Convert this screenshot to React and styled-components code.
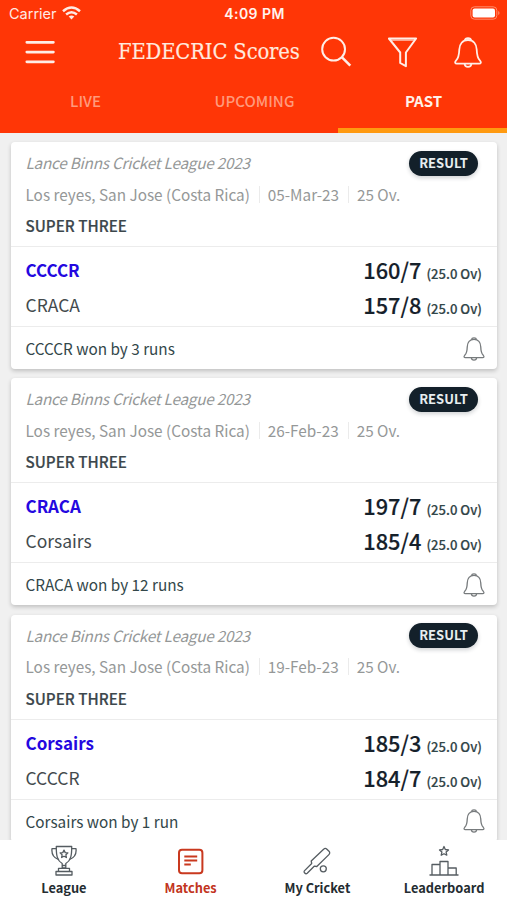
import styled, { createGlobalStyle } from "styled-components";

const GlobalStyle=createGlobalStyle`
    *{
        box-sizing:border-box;
    }
    body{
        margin:0;
        background-color:#f0f0f0;
        font-family:"Noto Sans CJK SC", "Source Sans Pro", sans-serif;
    }
`;
const Container=styled.div`
    display:flex;
    flex-direction:column;
    width:507px;
    height:900px;
    overflow:hidden;
    background-color:#f0f0f0;
`;
const Header=styled.header`
    flex:none;
    height:133px;
    color:white;
    background-color:#ff3606;
`;
const StatusBar=styled.div`
    display:grid;
    grid-template-columns:1fr auto 1fr;
    align-items:center;
    height:27px;
    padding:0 7px 0 9px;
    font-family:Inter, sans-serif;
    font-size:14.5px;
    line-height:27px;
    color:#ffeae3;
`;
const Carrier=styled.div`
    display:flex;
    align-items:center;
    gap:5px;
    & > svg{
        margin-top:-2px;
    }
`;
const Clock=styled.div`
    font-size:14px;
    font-weight:600;
    letter-spacing:0.45px;
    color:#fff3ee;
`;
const Battery=styled.div`
    display:flex;
    justify-content:flex-end;
    padding-bottom:1px;
`;
const TitleBar=styled.div`
    display:flex;
    align-items:center;
    height:50px;
    padding:0 24px 0 23px;
`;
const Title=styled.h1`
    width:182px;
    margin:0 21px 0 63px;
    font-family:"DejaVu Serif Condensed", "DejaVu Serif", serif;
    font-stretch:condensed;
    font-size:21.8px;
    font-weight:400;
    letter-spacing:-0.15px;
    line-height:50px;
    white-space:nowrap;
    color:#ffe9df;
    -webkit-text-stroke:0.15px #ffe9df;
`;
const Actions=styled.div`
    display:flex;
    align-items:center;
    gap:36px;
`;
const IconButton=styled.button`
    display:flex;
    padding:0;
    border:0;
    background:none;
    color:#ffeee7;
`;
const Tabs=styled.nav`
    display:grid;
    grid-template-columns:repeat(3, 1fr);
    height:56px;
`;
const Tab=styled.div`
    padding-top:11px;
    padding-left:2px;
    font-size:15px;
    font-weight:${props=>props.$active?700:500};
    line-height:26px;
    text-align:center;
    color:${props=>props.$active?"#fff1e9":"#ff9a7c"};
    border-bottom:5px solid ${props=>props.$active?"#ff9a10":"transparent"};
`;
const List=styled.main`
    flex:1;
    display:flex;
    flex-direction:column;
    gap:9.25px;
    min-height:0;
    padding:9px 10px 0 11px;
    overflow:hidden;
`;
const Card=styled.article`
    flex:none;
    height:227px;
    border-radius:4px;
    background-color:white;
    box-shadow:0 2px 4px rgba(0,0,0,0.2);
`;
const Info=styled.div`
    height:105px;
    padding:5px 20px 0 14.5px;
    border-bottom:1px solid #ececec;
`;
const InfoRow=styled.div`
    display:flex;
    align-items:center;
    justify-content:space-between;
    height:32px;
`;
const League=styled.div`
    margin-top:-2px;
    font-size:15.3px;
    font-style:italic;
    letter-spacing:-0.22px;
    line-height:32px;
    color:#949797;
`;
const Badge=styled.span`
    width:69px;
    height:25px;
    margin-right:-1px;
    border-radius:13px;
    font-size:13px;
    font-weight:700;
    line-height:24px;
    text-align:center;
    color:#e8eef0;
    background-color:#13202a;
    box-shadow:0 2px 4px rgba(19,32,42,0.2);
`;
const Meta=styled.div`
    display:flex;
    align-items:center;
    height:30px;
    margin-bottom:1px;
    font-size:15.3px;
    white-space:nowrap;
    color:#959898;
`;
const MetaItem=styled.span`
    height:17px;
    line-height:17px;
    & + &{
        margin-left:9px;
        padding-left:8px;
        border-left:1px solid #ebebeb;
    }
`;
const Stage=styled.div`
    font-size:15.2px;
    font-weight:500;
    line-height:30px;
    color:#3c474c;
    -webkit-text-stroke:0.2px #3c474c;
`;
const Innings=styled.div`
    height:80px;
    padding:5px 15px 0 14.5px;
    border-bottom:1px solid #ececec;
`;
const Team=styled.div`
    display:flex;
    justify-content:space-between;
    height:35px;
    font-size:${props=>props.$won?"17px":"17.5px"};
    font-weight:${props=>props.$won?700:400};
    line-height:35px;
    color:${props=>props.$won?"#2408e0":"#434a4d"};
`;
const Score=styled.div`
    font-size:21.8px;
    font-weight:500;
    color:#15202a;
    -webkit-text-stroke:0.15px #15202a;
`;
const Overs=styled.span`
    margin-left:5px;
    font-size:13.1px;
    color:#33484a;
`;
const Footer=styled.div`
    display:flex;
    align-items:center;
    justify-content:space-between;
    height:42px;
    padding:0 12px 0 14.5px;
    font-size:15.3px;
    line-height:42px;
    color:#33474a;
`;
const BellButton=styled(IconButton)`
    margin-top:1px;
    color:#777b7d;
`;
const BottomNav=styled.nav`
    flex:none;
    display:grid;
    grid-template-columns:repeat(4, 1fr);
    height:60px;
    background-color:white;
`;
const NavItem=styled.div`
    display:flex;
    flex-direction:column;
    align-items:center;
    padding-top:4px;
    padding-left:1px;
    font-size:12.8px;
    font-weight:700;
    line-height:19px;
    color:${props=>props.$active?"#c23420":"#242c31"};
    & > svg{
        margin-bottom:2px;
        color:${props=>props.$active?"#c9391f":"#555c61"};
    }
`;

const matches=[
    {date:"05-Mar-23", teams:[["CCCCR","160/7"],["CRACA","157/8"]], result:"CCCCR won by 3 runs"},
    {date:"26-Feb-23", teams:[["CRACA","197/7"],["Corsairs","185/4"]], result:"CRACA won by 12 runs"},
    {date:"19-Feb-23", teams:[["Corsairs","185/3"],["CCCCR","184/7"]], result:"Corsairs won by 1 run"},
];

function WifiIcon(){
    return (
        <svg width="19" height="14" viewBox="0 0 19 14" fill="none" stroke="currentColor" strokeWidth="2.5">
            <path d="M1 5.2Q9.5-2.2 18 5.2" />
            <path d="M4.1 8.5Q9.5 3.9 14.9 8.5" />
            <path d="M6.7 10.6Q9.5 8.4 12.3 10.6L9.5 13.6Z" fill="currentColor" stroke="none" />
        </svg>
    );
}
function BatteryIcon(){
    return (
        <svg width="30" height="14" viewBox="0 0 30 14">
            <rect x=".8" y=".8" width="26" height="12.4" rx="3.6" fill="none" stroke="#ff8c6c" strokeWidth="1" />
            <rect x="2.6" y="2.5" width="22.4" height="9" rx="2" fill="white" />
            <path d="M28.2 5v4q1.3-.6 1.3-2t-1.3-2Z" fill="#ff8c6c" />
        </svg>
    );
}
function MenuIcon(){
    return (
        <svg width="32" height="26" viewBox="0 0 32 26" stroke="currentColor" strokeWidth="2.7" strokeLinecap="round">
            <path d="M3.8 3.3h26.6M3.8 13.1h26.6M3.8 22.8h26.6" />
        </svg>
    );
}
function SearchIcon(){
    return (
        <svg width="31" height="32" viewBox="0 0 31 32" fill="none" stroke="currentColor" strokeWidth="2">
            <circle cx="12.6" cy="13.2" r="11.4" />
            <path d="M20.8 21.2l8.5 8.5" strokeWidth="2.6" />
        </svg>
    );
}
function FilterIcon(){
    return (
        <svg width="30" height="31" viewBox="0 0 30 31" fill="none" stroke="currentColor" strokeWidth="2" strokeLinejoin="round">
            <path d="M.9 1.5H28.1L17.9 15.5V29.2L12.2 26V15.5Z" />
            <path d="M2.6 3.1H26.6" strokeWidth="1" />
        </svg>
    );
}
function BellIcon({width, height, stroke}){
    return (
        <svg width={width} height={height} viewBox="0 0 28 31" fill="none" stroke="currentColor" strokeWidth={stroke} strokeLinejoin="round">
            <path d="M14 3C8.5 3 5.5 7.3 5.3 12.5C5.1 18.5 4.4 21.4 2 23.7C.4 25.4 1.3 26.6 2.8 26.6H25.2C26.7 26.6 27.6 25.4 26 23.7C23.6 21.4 22.9 18.5 22.7 12.5C22.5 7.3 19.5 3 14 3Z" />
            <path d="M10.9 3.6C11.2.4 16.8.4 17.1 3.6" />
            <path d="M10.6 26.8C10.9 31 17.1 31 17.4 26.8" />
        </svg>
    );
}
function TrophyIcon(){
    return (
        <svg width="26" height="32" viewBox="0 0 26 32" fill="none" stroke="currentColor" strokeWidth="1.3" strokeLinejoin="round">
            <path d="M5.3 2.5H20.7C20.8 11 20 16.5 14.8 19.5V24H11.2V19.5C6 16.5 5.2 11 5.3 2.5Z" />
            <path d="M5.5 4.7H1C.5 9 2 13.3 7.3 15.3M20.5 4.7H25C25.5 9 24 13.3 18.7 15.3" />
            <path d="M11 21.5h4M7.5 27.5V24.3H18.5V27.5M5 31V27.5H21V31Z" />
            <path d="M13 6.1l1.2 2.5 2.7.3-2 1.9.5 2.7-2.4-1.3-2.4 1.3.5-2.7-2-1.9 2.7-.3Z" />
        </svg>
    );
}
function MatchesIcon(){
    return (
        <svg width="26" height="32" viewBox="0 0 26 32" fill="none" stroke="currentColor" strokeWidth="2">
            <rect x="1" y="5.7" width="23.4" height="23.6" rx="3" />
            <path d="M6.3 12.4H19.2M6.3 16.4H19.2M6.3 20.4H12.8" />
        </svg>
    );
}
function CricketIcon(){
    return (
        <svg width="28" height="32" viewBox="0 0 28 32" fill="none" stroke="currentColor" strokeWidth="1.3" strokeLinejoin="round">
            <path d="M8.2 17L20.6 5.2C21.6 4.2 23 4.3 23.9 5.2L26 7.3C27 8.3 26.9 9.6 25.9 10.6L13.8 22.5L11.2 22.2L4.2 29.2C2.6 30.7 0 28.2 1.6 26.6L8.7 19.5Z" />
            <circle cx="20.3" cy="24.8" r="3" />
        </svg>
    );
}
function PodiumIcon(){
    return (
        <svg width="30" height="32" viewBox="0 0 30 32" fill="none" stroke="currentColor" strokeWidth="1.3" strokeLinejoin="round">
            <path d="M15 2.5l1.3 3 3.2.4-2.4 2.2.7 3.1-2.8-1.5-2.8 1.5.7-3.1-2.4-2.2 3.2-.4Z" />
            <path d="M.5 31H29.5M3 31V20.5H11V31M11 20.5V17.5H19V31M19 24H27.2V31" />
        </svg>
    );
}

function MatchCard({match}){
    return (
        <Card>
            <Info>
                <InfoRow>
                    <League>Lance Binns Cricket League 2023</League>
                    <Badge>RESULT</Badge>
                </InfoRow>
                <Meta>
                    <MetaItem>Los reyes, San Jose (Costa Rica)</MetaItem>
                    <MetaItem>{match.date}</MetaItem>
                    <MetaItem>25 Ov.</MetaItem>
                </Meta>
                <Stage>SUPER THREE</Stage>
            </Info>
            <Innings>
                {match.teams.map(([name,score],i)=>(
                    <Team key={name} $won={i===0}>
                        <span>{name}</span>
                        <Score>{score}<Overs>(25.0 Ov)</Overs></Score>
                    </Team>
                ))}
            </Innings>
            <Footer>
                <span>{match.result}</span>
                <BellButton aria-label="Notify"><BellIcon width={22} height={24} stroke={1.7} /></BellButton>
            </Footer>
        </Card>
    );
}

function App(){
    return (
        <>
            <GlobalStyle />
            <Container>
                <Header>
                    <StatusBar>
                        <Carrier>Carrier <WifiIcon /></Carrier>
                        <Clock>4:09 PM</Clock>
                        <Battery><BatteryIcon /></Battery>
                    </StatusBar>
                    <TitleBar>
                        <IconButton aria-label="Menu"><MenuIcon /></IconButton>
                        <Title>FEDECRIC Scores</Title>
                        <Actions>
                            <IconButton aria-label="Search"><SearchIcon /></IconButton>
                            <IconButton aria-label="Filter"><FilterIcon /></IconButton>
                            <IconButton aria-label="Notifications"><BellIcon width={28} height={31} stroke={1.8} /></IconButton>
                        </Actions>
                    </TitleBar>
                    <Tabs>
                        <Tab>LIVE</Tab>
                        <Tab>UPCOMING</Tab>
                        <Tab $active>PAST</Tab>
                    </Tabs>
                </Header>
                <List>
                    {matches.map(match=><MatchCard key={match.date} match={match} />)}
                </List>
                <BottomNav>
                    <NavItem><TrophyIcon />League</NavItem>
                    <NavItem $active><MatchesIcon />Matches</NavItem>
                    <NavItem><CricketIcon />My Cricket</NavItem>
                    <NavItem><PodiumIcon />Leaderboard</NavItem>
                </BottomNav>
            </Container>
        </>
    );
}
export default App;
